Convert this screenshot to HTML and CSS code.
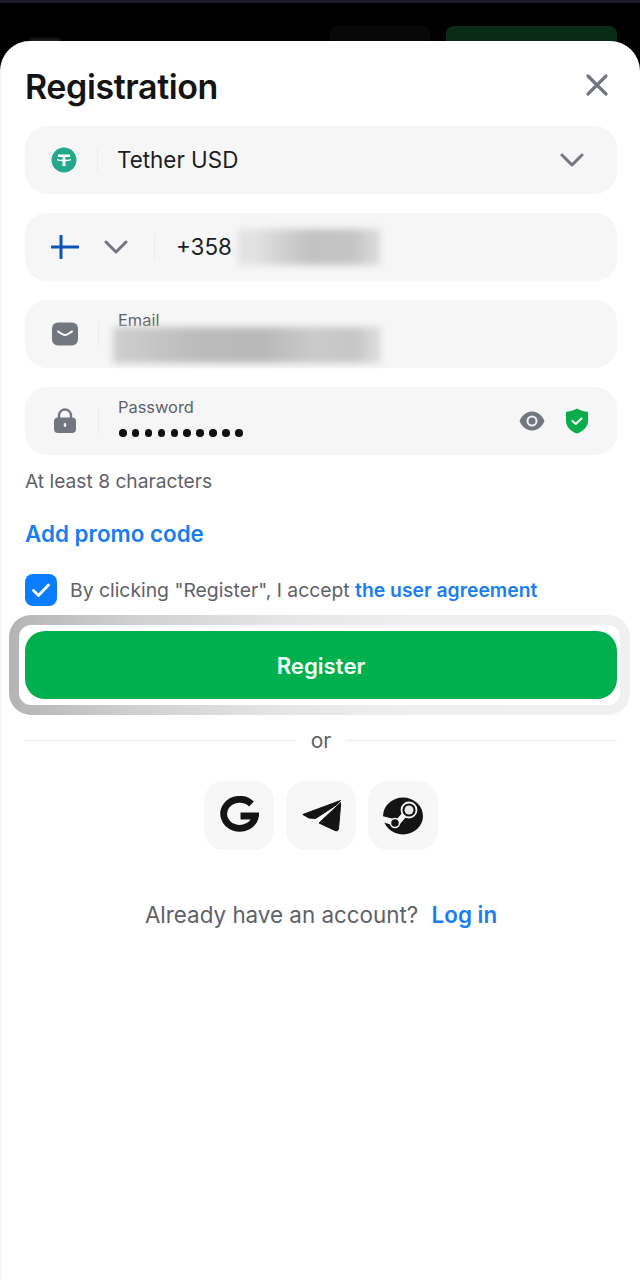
FILE: index.html
```html
<!DOCTYPE html>
<html>
  <head>
    <meta charset="utf-8" />
    <title>Registration</title>
    <link rel="stylesheet" href="styles.css">
  </head>

  <body>
    <div class="backdrop">
      <span class="back-logo"></span>
      <span class="back-login"></span>
      <span class="back-register"></span>
    </div>

    <main class="sheet">
      <header class="sheet-head">
        <h1>Registration</h1>
        <svg class="close" width="24" height="24" viewBox="0 0 24 24"><path d="M3 3l18 18M21 3L3 21" stroke="#72767f" stroke-width="3.2" stroke-linecap="round" fill="none"/></svg>
      </header>

      <form class="fields">
        <div class="field">
          <span class="ico ico-select">
            <svg width="26" height="26" viewBox="0 0 26 26"><circle cx="13" cy="13" r="12.5" fill="#26a98a"/><path d="M7 7.500h12v2.600h-4.500v9h-3v-9H7z" fill="#fff"/><path d="M6 12.600c3.500 1.200 10.500 1.200 14 0" stroke="#fff" stroke-width="1.300" fill="none"/></svg>
          </span>
          <span class="sep"></span>
          <span class="value value-select">Tether USD</span>
          <svg class="chev chev-end" width="24" height="14" viewBox="0 0 24 14"><path d="M2 2l10 10L22 2" stroke="#72767f" stroke-width="3" stroke-linecap="round" stroke-linejoin="round" fill="none"/></svg>
        </div>

        <div class="field">
          <span class="flag">
            <svg width="28" height="24" viewBox="0 0 28 24"><path d="M1 12h26" stroke="#0b55b5" stroke-width="3" stroke-linecap="round"/><path d="M10 1v22" stroke="#0b55b5" stroke-width="3" stroke-linecap="round"/></svg>
          </span>
          <svg class="chev chev-flag" width="24" height="14" viewBox="0 0 24 14"><path d="M2 2l10 10L22 2" stroke="#72767f" stroke-width="3" stroke-linecap="round" stroke-linejoin="round" fill="none"/></svg>
          <span class="sep sep-phone"></span>
          <span class="value value-phone">+358</span>
          <span class="blur blur-phone"></span>
        </div>

        <div class="field">
          <span class="ico ico-shift">
            <svg width="26" height="24" viewBox="0 0 26 24"><rect width="26" height="23" y="0.500" rx="6" fill="#72767f"/><path d="M6 9.500c3 1.500 4.500 3.500 7 3.500s4-2 7-3.500" stroke="#fff" stroke-width="2" stroke-linecap="round" fill="none"/></svg>
          </span>
          <span class="sep sep-shift"></span>
          <div class="stack">
            <label class="float-label">Email</label>
            <span class="blur blur-email"></span>
          </div>
        </div>

        <div class="field">
          <span class="ico ico-shift">
            <svg width="22" height="26" viewBox="0 0 22 26"><path d="M5 11V7.500a6 6 0 0 1 12 0V11" stroke="#72767f" stroke-width="2.400" fill="none"/><rect y="9.500" width="22" height="15.500" rx="4" fill="#72767f"/><rect x="9.800" y="15" width="2.400" height="4" rx="1.200" fill="#f5f5f6"/></svg>
          </span>
          <span class="sep sep-shift"></span>
          <div class="stack stack-pass">
            <label class="float-label">Password</label>
            <span class="dots"><i></i><i></i><i></i><i></i><i></i><i></i><i></i><i></i><i></i><i></i></span>
          </div>
          <svg class="eye" width="26" height="20" viewBox="0 0 26 20"><path d="M13 .5C7 .5 2.500 5 .5 10c2 5 6.500 9.500 12.500 9.500S23.500 15 25.500 10C23.500 5 19 .5 13 .5z" fill="#72767f"/><circle cx="13" cy="10" r="4.500" fill="none" stroke="#eef0f3" stroke-width="2"/></svg>
          <svg class="shield" width="24" height="26" viewBox="0 0 24 26"><path d="M12 .5c3 2 7 3.200 11 3.200V13c0 6-5 10.500-11 12.500C6 23.500 1 19 1 13V3.700C5 3.700 9 2.500 12 .5z" fill="#0cab4c"/><path d="M7.500 13l3.200 3 5.800-5.500" stroke="#e9f8ee" stroke-width="2.200" stroke-linecap="round" stroke-linejoin="round" fill="none"/></svg>
        </div>
      </form>

      <p class="hint">At least 8 characters</p>
      <a class="promo">Add promo code</a>

      <div class="agree">
        <span class="check">
          <svg width="22" height="18" viewBox="0 0 22 18"><path d="M3.500 9.500l5 5L18.500 4" stroke="#fff" stroke-width="2.800" stroke-linecap="round" stroke-linejoin="round" fill="none"/></svg>
        </span>
        <span class="agree-text">By clicking "Register", I accept <a>the user agreement</a></span>
      </div>

      <div class="ring">
        <div class="ring-inner">
          <button type="button" class="register">Register</button>
        </div>
      </div>

      <div class="or"><span></span><em>or</em><span></span></div>

      <div class="socials">
        <a class="social">
          <svg class="google" width="39" height="36" viewBox="0 0 39 36"><path d="M31.500 8A16 14.500 0 1 0 35.500 20H20.500" stroke="#141414" stroke-width="6.800" fill="none"/></svg>
        </a>
        <a class="social">
          <svg width="39" height="32" viewBox="0 0 39 32"><path d="M.8 14.500L38.500.5 35 4.500 13.500 18.500 7 18z" fill="#141414" stroke="#141414" stroke-linejoin="round"/><path d="M17 23L38.800 2.500 36.500 29Q35.500 32 33 30.500z" fill="#141414" stroke="#141414" stroke-linejoin="round"/></svg>
        </a>
        <a class="social">
          <svg width="40" height="38" viewBox="0 0 40 38"><ellipse cx="20" cy="19" rx="20" ry="18.500" fill="#141414"/><path d="M-1 19l12 3-2 6-10-3z" fill="#f6f6f6"/><path d="M14 22l6-7 3 5-6 7z" fill="#f6f6f6"/><circle cx="12" cy="26" r="4.500" fill="#141414" stroke="#f6f6f6" stroke-width="1.500"/><circle cx="26" cy="13" r="7.500" fill="#141414" stroke="#f6f6f6" stroke-width="1.800"/><circle cx="26" cy="13" r="4.500" fill="#e8e8e8"/></svg>
        </a>
      </div>

      <p class="login">Already have an account? <a>Log in</a></p>
    </main>
  </body>
</html>
```

FILE: styles.css
```css
* {
  box-sizing: border-box;
}

body {
  margin: 0;
  width: 640px;
  height: 1280px;
  overflow: hidden;
  background: #000;
  font-family: Inter, "Liberation Sans", sans-serif;
}

a {
  color: #1a7df0;
  font-weight: 600;
}

/* page behind the sheet */
.backdrop {
  height: 41px;
  overflow: hidden;
  border-top: 3px solid #1c1c2b;
  padding: 23px 23px 0 30px;
  display: flex;
  align-items: flex-start;
}

.back-logo {
  width: 30px;
  height: 8px;
  margin-top: 13px;
  background: #2a2a2a;
  filter: blur(1.500px);
}

.back-login {
  width: 100px;
  height: 15px;
  margin-left: auto;
  background: #080808;
  border-radius: 8px 8px 0 0;
}

.back-register {
  width: 171px;
  height: 15px;
  margin-left: 16px;
  background: #0a2c16;
  border-radius: 8px 8px 0 0;
}

.sheet {
  height: 1239px;
  background: #fff;
  border-radius: 30px 30px 0 0;
  padding: 0 23px 0 25px;
  border-left: 1px solid #f2f2f2;
}

.sheet-head {
  height: 85px;
  margin-left: -1px;
  padding-top: 26px;
  display: flex;
  justify-content: space-between;
  align-items: flex-start;
}

h1 {
  margin: 0;
  font-size: 34px;
  line-height: 40px;
  font-weight: 600;
  letter-spacing: -0.4px;
  color: #141414;
}

.close {
  margin: 6px 8px 0 0;
}

.fields {
  margin-left: -1px;
  display: flex;
  flex-direction: column;
  gap: 19px;
}

.field {
  height: 68px;
  background: #f6f6f7;
  border-radius: 22px;
  display: flex;
  align-items: center;
  padding-left: 26px;
}

.ico {
  width: 26px;
  display: flex;
  justify-content: center;
}

.ico-shift {
  margin-left: 1px;
}

.sep {
  width: 1px;
  height: 26px;
  background: #ececee;
  margin-left: 20px;
}

.value {
  font-size: 22.400px;
  color: #1d1d1f;
  margin-bottom: 2px;
}

.value-select {
  margin-left: 19px;
}

.chev-end {
  margin-left: auto;
  margin-right: 33px;
}

.flag {
  display: flex;
}

.chev-flag {
  margin-left: 25px;
}

.sep-phone {
  margin-left: 26px;
}

.value-phone {
  margin-left: 21px;
}

.blur {
  display: block;
  background: #c4c4c4;
  filter: blur(3.500px);
}

.blur-phone {
  width: 142px;
  height: 36px;
  margin-left: 6px;
  background: linear-gradient(90deg, #e2e2e2 0 12%, #d6d6d6 25%, #c2c2c2 50%, #c4c4c4 80%, #dcdcdc 100%);
}

.stack {
  margin-left: 19px;
  display: flex;
  flex-direction: column;
}

.stack-pass {
  margin-bottom: 6px;
}

.float-label {
  font-size: 16.400px;
  line-height: 20px;
  color: #5f6168;
}

.field .blur-email {
  width: 268px;
  height: 36px;
  margin: -3px 0 -5px -5px;
  background: linear-gradient(90deg, #cfcfcf 0, #bcbcbc 30%, #b8b8b8 55%, #cacaca 75%, #c6c6c6 90%, #dedede 100%);
}

.dots {
  display: flex;
  gap: 5.400px;
  margin: 10px 0 0 1px;
  height: 12px;
  align-items: center;
}

.dots i {
  width: 7.500px;
  height: 7.500px;
  border-radius: 50%;
  background: #111;
}

.eye {
  margin-left: auto;
}

.shield {
  margin: 0 28px 0 20px;
}

.hint {
  margin: 15px 0 0 -1px;
  font-size: 19.200px;
  line-height: 22px;
  color: #5f6168;
}

.promo {
  display: block;
  margin: 28px 0 0 -1px;
  font-size: 22.400px;
  line-height: 28px;
}

.agree {
  margin: 26px 0 0 -1px;
  display: flex;
  align-items: center;
  gap: 13px;
}

.check {
  width: 32px;
  height: 32px;
  border-radius: 8px;
  background: #0a7cff;
  display: flex;
  align-items: center;
  justify-content: center;
}

.agree-text {
  font-size: 19.330px;
  color: #5f6168;
}

.ring {
  margin: 9px -13px 0 -17px;
  padding: 10px;
  border-radius: 22px;
  background: linear-gradient(90deg, #b4b4b4 0, #d0d0d0 20%, #e6e6e6 45%, #efefef 65%, #f0f0f0 100%);
}

.ring-inner {
  background: #fff;
  border-radius: 12px;
  padding: 6px 3px 6px 6px;
}

.register {
  display: block;
  width: 100%;
  height: 68px;
  border: 0;
  border-radius: 20px;
  background: #00b04f;
  color: #f2fff6;
  font: 600 22.200px Inter, "Liberation Sans", sans-serif;
}

.or {
  margin: 11px 0 0 -1px;
  display: flex;
  align-items: center;
  height: 28px;
}

.or span {
  flex: 1;
  height: 1px;
  background: #ececec;
}

.or em {
  width: 50px;
  text-align: center;
  font-style: normal;
  font-size: 21px;
  color: #5f6168;
}

.socials {
  margin: 27px 0 0 -1px;
  display: flex;
  justify-content: center;
  gap: 12px;
}

.social {
  width: 70px;
  height: 69px;
  border-radius: 20px;
  background: #f7f7f7;
  display: flex;
  align-items: center;
  justify-content: center;
}

.google {
  margin-bottom: 3px;
}

.login {
  margin: 51px 0 0 -1px;
  text-align: center;
  font-size: 22.400px;
  line-height: 28px;
  color: #5f6168;
}

.login a {
  margin-left: 7px;
}
```
